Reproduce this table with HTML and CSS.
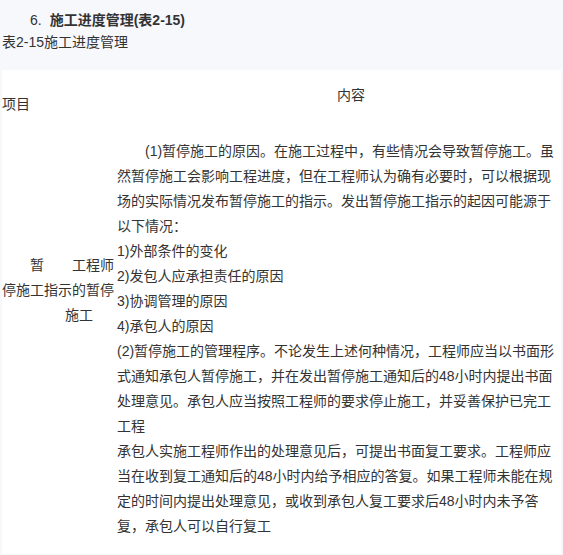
FILE: index.html
```html
<!DOCTYPE html>
<html lang="zh-CN">
<head>
  <meta charset="UTF-8">
  <meta name="viewport" content="width=device-width, initial-scale=1.0">
  <title>施工进度管理</title>
  <link rel="stylesheet" href="styles.css">
</head>
<body>
  <div class="intro">
    <h4 class="sec-title"><span class="num">6.</span><b>施工进度管理(表2-15)</b></h4>
    <p class="caption">表2-15施工进度管理</p>
  </div>

  <div class="sheet">
    <div class="grid">
      <div class="cell head-item">项目</div>
      <div class="cell head-content">内容</div>

      <div class="cell item">
        <div class="l1">暂<span class="gap"></span>工程师</div>
        <div>停施工指示的暂停</div>
        <div class="l3">施工</div>
      </div>
      <div class="cell content">
        <p class="indent">(1)暂停施工的原因。在施工过程中，有些情况会导致暂停施工。虽然暂停施工会影响工程进度，但在工程师认为确有必要时，可以根据现场的实际情况发布暂停施工的指示。发出暂停施工指示的起因可能源于以下情况：</p>
        <p>1)外部条件的变化</p>
        <p>2)发包人应承担责任的原因</p>
        <p>3)协调管理的原因</p>
        <p>4)承包人的原因</p>
        <p>(2)暂停施工的管理程序。不论发生上述何种情况，工程师应当以书面形式通知承包人暂停施工，并在发出暂停施工通知后的48小时内提出书面处理意见。承包人应当按照工程师的要求停止施工，并妥善保护已完工工程</p>
        <p>承包人实施工程师作出的处理意见后，可提出书面复工要求。工程师应当在收到复工通知后的48小时内给予相应的答复。如果工程师未能在规定的时间内提出处理意见，或收到承包人复工要求后48小时内未予答复，承包人可以自行复工</p>
      </div>
    </div>
  </div>
</body>
</html>
```

FILE: styles.css
```css
body {
  margin: 0;
  background-color: #f7f8fc;
  color: #333;
  font-family: "Liberation Sans", "Noto Sans CJK SC", sans-serif;
  font-size: 14px;
  line-height: 25px;
}

.intro {
  padding: 9px 0 17px 2px;
}

.sec-title {
  margin: 0;
  padding-left: 28px;
  font-size: 14px;
  font-weight: normal;
  line-height: 22px;
}

.sec-title .num {
  margin-right: 8px;
}

.caption {
  margin: 0;
  line-height: 22px;
}

.sheet {
  background-color: #fff;
  margin: 0 2px 0 2px;
  min-height: 484px;
}

.grid {
  display: grid;
  grid-template-columns: 115px 440px;
  grid-template-rows: 69px auto;
}

.head-item {
  align-self: center;
}

.head-content {
  padding-top: 13px;
  text-align: center;
  text-indent: 2em;
}

.item {
  padding-top: 114px;
}

.item .l1 {
  padding-left: 28px;
}

.item .gap {
  display: inline-block;
  width: 28px;
}

.item .l3 {
  padding-left: 63px;
}

.content p {
  margin: 0;
}

.content .indent {
  text-indent: 2em;
}
```
